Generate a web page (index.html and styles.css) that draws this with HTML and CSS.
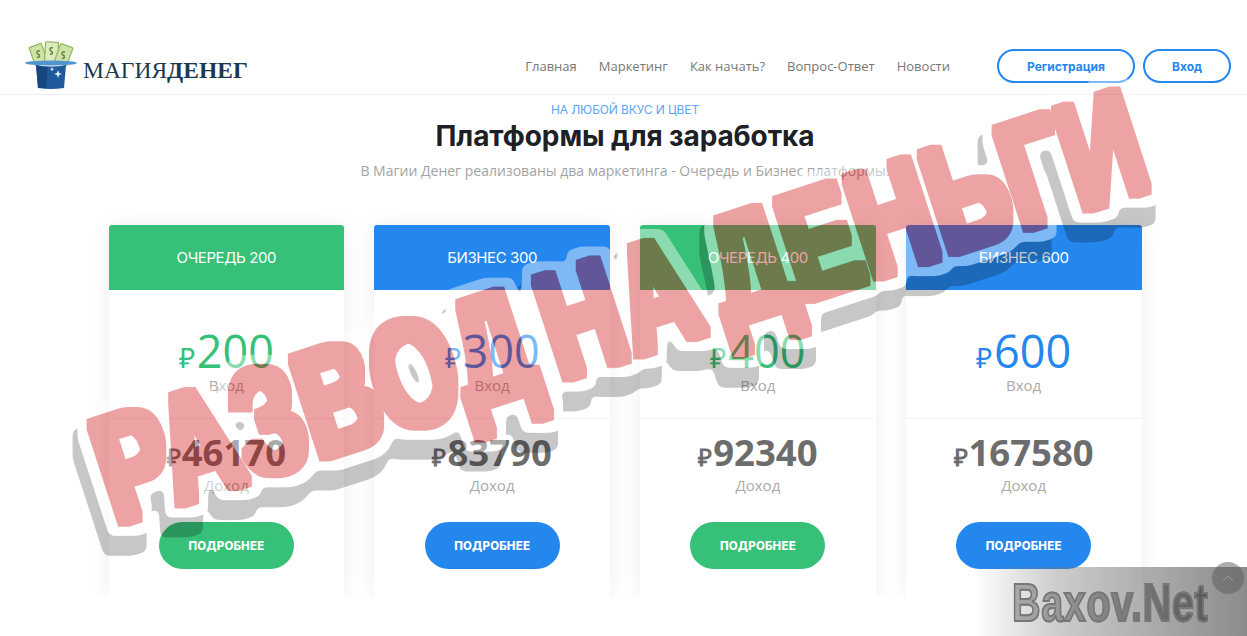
FILE: index.html
```html
<!DOCTYPE html>
<html lang="ru">
<head>
<meta charset="utf-8">
<title>Магия Денег</title>
<link rel="stylesheet" href="styles.css">
</head>
<body>
<div class="page">
  <header class="site-header">
    <a class="logo">
      <svg class="logo-hat" width="58" height="52" viewBox="0 0 58 52">
        <g stroke="#8fb55e" stroke-width="1.2">
          <rect x="10" y="6" width="13" height="19" rx="1" fill="#cfe3a8" transform="rotate(-20 16 16)"/>
          <rect x="23" y="3" width="13" height="21" rx="1" fill="#dcebbd" transform="rotate(3 29 14)"/>
          <rect x="35" y="6" width="13" height="19" rx="1" fill="#cfe3a8" transform="rotate(20 41 16)"/>
        </g>
        <g fill="none" stroke="#5f8f3a" stroke-width="1.6">
          <path d="M18 12c-3-1-4 2-2 3s2 4-1 3"/>
          <path d="M31 9c-3-1-4 2-2 3s2 4-1 3"/>
          <path d="M43 13c-3-1-4 2-2 3s2 4-1 3"/>
        </g>
        <ellipse cx="29" cy="24" rx="26" ry="2.4" fill="#4f95cf"/>
        <path d="M14 26q15 3 30 0l-2 23q-13 2-26 0z" fill="#1f5a9c"/>
        <path d="M14 26q7 2 12 2l-2 21-8 0z" fill="#17467f"/>
        <path d="M36 31l1 3 3 1-3 1-1 3-1-3-3-1 3-1zM30 28l.6 1.6 1.6.6-1.6.6-.6 1.6-.6-1.6-1.6-.6 1.6-.6z" fill="#e8f2ff"/>
      </svg>
      <span class="logo-text">МАГИЯ<b>ДЕНЕГ</b></span>
    </a>
    <nav class="main-nav">
      <a>Главная</a><a>Маркетинг</a><a>Как начать?</a><a>Вопрос-Ответ</a><a>Новости</a>
    </nav>
    <div class="auth">
      <a class="auth-btn reg">Регистрация</a>
      <a class="auth-btn login">Вход</a>
    </div>
  </header>

  <section class="platforms">
    <p class="eyebrow">НА ЛЮБОЙ ВКУС И ЦВЕТ</p>
    <h1 class="title">Платформы для заработка</h1>
    <p class="subtitle">В Магии Денег реализованы два маркетинга - Очередь и Бизнес платформы.</p>

    <div class="cards">
      <article class="card green">
        <h2 class="card-head">ОЧЕРЕДЬ 200</h2>
        <div class="entry"><div class="price"><span class="rub">₽</span>200</div><div class="cap">Вход</div></div>
        <div class="income"><div class="sum"><span class="rub">₽</span>46170</div><div class="cap">Доход</div><a class="more">ПОДРОБНЕЕ</a></div>
      </article>
      <article class="card blue">
        <h2 class="card-head">БИЗНЕС 300</h2>
        <div class="entry"><div class="price"><span class="rub">₽</span>300</div><div class="cap">Вход</div></div>
        <div class="income"><div class="sum"><span class="rub">₽</span>83790</div><div class="cap">Доход</div><a class="more">ПОДРОБНЕЕ</a></div>
      </article>
      <article class="card green">
        <h2 class="card-head">ОЧЕРЕДЬ 400</h2>
        <div class="entry"><div class="price"><span class="rub">₽</span>400</div><div class="cap">Вход</div></div>
        <div class="income"><div class="sum"><span class="rub">₽</span>92340</div><div class="cap">Доход</div><a class="more">ПОДРОБНЕЕ</a></div>
      </article>
      <article class="card blue">
        <h2 class="card-head">БИЗНЕС 600</h2>
        <div class="entry"><div class="price"><span class="rub">₽</span>600</div><div class="cap">Вход</div></div>
        <div class="income"><div class="sum"><span class="rub">₽</span>167580</div><div class="cap">Доход</div><a class="more">ПОДРОБНЕЕ</a></div>
      </article>
    </div>
  </section>

  <div class="watermark"><span class="wm-text">Baxov.Net</span></div>
  <div class="to-top"><svg width="12" height="7" viewBox="0 0 12 7"><path d="M1 6l5-5 5 5" fill="none" stroke="#999" stroke-width="1"/></svg></div>

  <svg class="defs" width="0" height="0">
    <filter id="stamp" filterUnits="userSpaceOnUse" x="0" y="0" width="1247" height="636" color-interpolation-filters="sRGB">
      <feMorphology in="SourceAlpha" operator="dilate" radius="5" result="fatRaw"/>
      <feGaussianBlur in="fatRaw" stdDeviation=".6" result="fat"/>
      <feMorphology in="SourceAlpha" operator="dilate" radius="14" result="outlineRaw"/>
      <feGaussianBlur in="outlineRaw" stdDeviation="3" result="outlineBlur"/>
      <feComponentTransfer in="outlineBlur" result="outline"><feFuncA type="linear" slope="8" intercept="-3.5"/></feComponentTransfer>
      <feOffset in="outline" dx="-5" dy="20" result="shifted"/>
      <feComposite in="shifted" in2="outline" operator="out" result="shadowShape"/>
      <feFlood flood-color="#000" flood-opacity=".22"/>
      <feComposite in2="shadowShape" operator="in" result="shadow"/>
      <feComposite in="outline" in2="fat" operator="out" result="ring"/>
      <feFlood flood-color="#fff" flood-opacity=".42"/>
      <feComposite in2="ring" operator="in" result="white"/>
      <feFlood flood-color="#cd0000" flood-opacity=".36"/>
      <feComposite in2="fat" operator="in" result="fill"/>
      <feMerge><feMergeNode in="shadow"/><feMergeNode in="white"/><feMergeNode in="fill"/></feMerge>
    </filter>
  </svg>
  <div class="stamp"><div class="stamp-text">РАЗВОД НА ДЕНЬГИ</div></div>
</div>
</body>
</html>
```
FILE: styles.css
```css
* { box-sizing: border-box; }
html, body { margin: 0; padding: 0; }
body { background: #fff; font-family: "Open Sans", "Liberation Sans", sans-serif; overflow: hidden; }
.page { position: relative; width: 1247px; height: 636px; overflow: hidden; background: #fff; }

.site-header { height: 95px; padding: 41px 16px 0 22px; display: flex; align-items: flex-start; border-bottom: 1px solid #f0f0f0; }
.logo { display: flex; align-items: flex-end; height: 50px; width: 300px; }
.logo-hat { flex: none; margin-right: 3px; }
.logo-text { font-family: "Liberation Serif", serif; font-size: 23.5px; color: #1c3a4f; line-height: 1; margin-bottom: 9px; white-space: nowrap; }
.logo-text b { font-weight: 700; }
.main-nav { margin-left: 205px; display: flex; gap: 22px; height: 50px; align-items: center; font-size: 13px; color: #777; white-space: nowrap; }
.auth { margin-left: 47px; display: flex; gap: 8px; margin-top: 8px; }
.auth-btn { height: 34px; border: 2px solid #2487ee; border-radius: 17px; display: flex; align-items: center; justify-content: center; color: #2487ee; font-family: Inter, "Open Sans", sans-serif; font-weight: 700; font-size: 12px; }
.auth-btn.reg { width: 138px; }
.auth-btn.login { width: 88px; }

.platforms { display: flex; flex-direction: column; align-items: center; height: 502px; overflow: hidden; padding-left: 3px; }
.eyebrow { margin: 7px 0 0; font-family: Inter, sans-serif; font-size: 12px; line-height: 16px; letter-spacing: -.1px; color: #5aa6f3; }
.title { margin: 2px 0 0; font-family: Inter, sans-serif; font-size: 28px; line-height: 32px; font-weight: 700; color: #1d2126; letter-spacing: -.1px; }
.subtitle { margin: 8px 0 0; font-size: 14px; line-height: 22px; color: #a3a3a3; }

.cards { margin-top: 43px; width: 1033px; display: grid; grid-template-columns: repeat(4, 1fr); gap: 30px; height: 372px; flex: none; }
.card { background: #fff; border-radius: 3px 3px 0 0; box-shadow: 0 0 22px rgba(0,0,0,.07); text-align: center; height: 372px; }
.card-head { margin: 0; height: 65px; display: flex; align-items: center; justify-content: center; border-radius: 3px 3px 0 0; color: #fff; font-family: Inter, sans-serif; font-weight: 400; font-size: 15px; letter-spacing: -.4px; }
.green .card-head { background: #37c078; }
.blue .card-head { background: #2487ee; }
.entry { height: 129px; padding-top: 39px; border-bottom: 1px solid #f3f3f3; }
.price { font-size: 45px; line-height: 44px; font-weight: 400; }
.price .rub { font-size: 28px; line-height: 1; margin-right: 2px; }
.green .price { color: #37c078; }
.blue .price { color: #2487ee; }
.cap { font-size: 15px; line-height: 20px; color: #aaa; }
.entry .cap { margin-top: 2px; }
.income { padding-top: 13px; }
.sum { font-size: 36.5px; line-height: 40px; font-weight: 700; color: #6c6c6c; }
.sum .rub { font-size: 24px; line-height: 1; margin-right: 1px; }
.income .cap { margin-top: 3px; }
.more { display: flex; margin: 27px auto 0; width: 135px; height: 47px; border-radius: 24px; align-items: center; justify-content: center; color: #fff; font-family: Inter, sans-serif; font-weight: 800; font-size: 11.5px; letter-spacing: .2px; }
.green .more { background: #37c078; }
.blue .more { background: #2487ee; }

.watermark { position: absolute; right: 0; bottom: 0; width: 272px; height: 69px; background: linear-gradient(90deg, rgba(110,110,110,0), rgba(110,110,110,.35) 30%, rgba(110,110,110,.8)); display: flex; align-items: center; }
.wm-text { margin-left: 37px; font-family: "Liberation Sans", sans-serif; font-weight: 700; font-size: 54px; line-height: 1; transform: scaleX(.73); transform-origin: left center; color: transparent; background: linear-gradient(90deg, #aaa, #5a5a5a); -webkit-background-clip: text; background-clip: text; letter-spacing: 1px; white-space: nowrap; -webkit-text-stroke: 2px #777; }
.to-top { position: absolute; left: 1212px; top: 562px; width: 32px; height: 32px; border-radius: 50%; background: rgba(90,90,90,.5); display: flex; align-items: center; justify-content: center; }

.defs { position: absolute; }
.stamp { position: absolute; left: 0; top: 0; width: 1247px; height: 636px; filter: url(#stamp); }
.stamp-text { position: absolute; left: 620px; top: 306px; font-family: "Liberation Sans", sans-serif; font-weight: 700; font-size: 150px; line-height: 1; white-space: nowrap; transform: translate(-50%, -50%) rotate(-18deg) scaleX(.71); color: #000; letter-spacing: 3px; word-spacing: -20px; }
```
